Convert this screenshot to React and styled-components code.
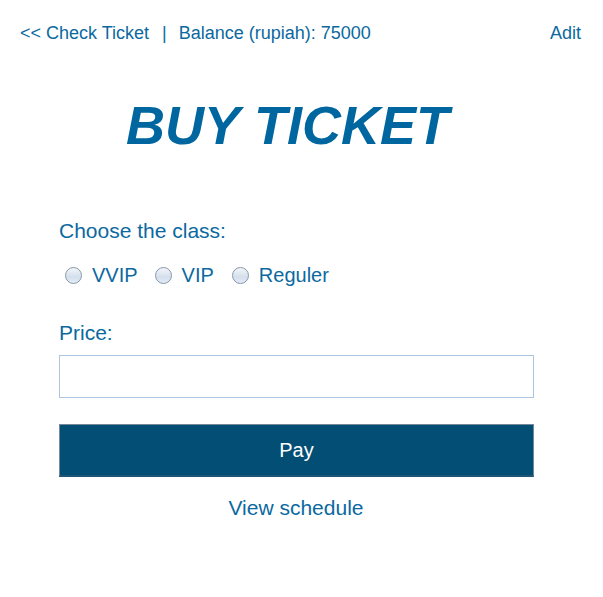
import React from 'react'
import styled, { createGlobalStyle } from 'styled-components';

const Global = createGlobalStyle`
  body {
    margin: 0;
    background: #ffffff;
    font-family: "Liberation Sans", Arial, sans-serif;
  }
`;

const Page = styled.div`
  width: 603px;
  height: 597px;
  color: #0b69a0;
`;

const TopBar = styled.div`
  display: flex;
  justify-content: space-between;
  align-items: center;
  padding: 22px 22px 0 20px;
  font-size: 18px;
  line-height: 22px;
`;

const NavLink = styled.a`
  color: #0b69a0;
  text-decoration: none;
`;

const Sep = styled.span`
  margin: 0 12px 0 13px;
`;

const Title = styled.h1`
  margin: 0;
  padding: 52px 0 0 126px;
  height: 58px;
  font-size: 54px;
  line-height: 58px;
  font-weight: 700;
  font-style: italic;
  color: #00669f;
`;

const Form = styled.form`
  margin: 0 0 0 59px;
  width: 474px;
  padding-top: 65px;
`;

const Label = styled.div`
  font-size: 21px;
  line-height: 24px;
`;

const RadioRow = styled.div`
  display: flex;
  align-items: center;
  margin: 20px 0 34px 6px;
`;

const Option = styled.label`
  display: flex;
  align-items: center;
  font-size: 20px;
  line-height: 24px;
  margin-right: ${({ $gap }) => $gap}px;
`;

const Radio = styled.input`
  appearance: none;
  width: 17px;
  height: 17px;
  margin: 0 10px 0 0;
  border-radius: 50%;
  border: 1px solid #8797a8;
  background: linear-gradient(#f4f6f9, #d3dfec 60%, #e4ecf5);
  box-sizing: border-box;
`;

const PriceInput = styled.input`
  display: block;
  box-sizing: border-box;
  width: 475px;
  height: 43px;
  margin-top: 10px;
  border: 1px solid #adc6df;
  outline: none;
  background: #fff;
`;

const PayButton = styled.button`
  display: block;
  box-sizing: border-box;
  width: 475px;
  height: 53px;
  margin-top: 26px;
  background: #034e74;
  border: 1px solid #76889a;
  border-bottom: 2px solid #1f5576;
  color: #ffffff;
  font-family: "Liberation Sans", Arial, sans-serif;
  font-size: 20px;
  padding: 0;
`;

const Schedule = styled.div`
  text-align: center;
  font-size: 21px;
  line-height: 24px;
  margin-top: 19px;
`;

export default function App() {
  const options = [
    { label: 'VVIP', gap: 17 },
    { label: 'VIP', gap: 18 },
    { label: 'Reguler', gap: 0 },
  ];
  return (
    <>
      <Global />
      <Page>
        <TopBar>
          <div>
            <NavLink href="#">&lt;&lt; Check Ticket</NavLink>
            <Sep>|</Sep>
            <span>Balance (rupiah): 75000</span>
          </div>
          <NavLink href="#">Adit</NavLink>
        </TopBar>
        <Title>BUY TICKET</Title>
        <Form onSubmit={(e) => e.preventDefault()}>
          <Label>Choose the class:</Label>
          <RadioRow>
            {options.map((o) => (
              <Option key={o.label} $gap={o.gap}>
                <Radio type="radio" name="class" />
                {o.label}
              </Option>
            ))}
          </RadioRow>
          <Label>Price:</Label>
          <PriceInput type="text" />
          <PayButton type="submit">Pay</PayButton>
          <Schedule>View schedule</Schedule>
        </Form>
      </Page>
    </>
  )
}
